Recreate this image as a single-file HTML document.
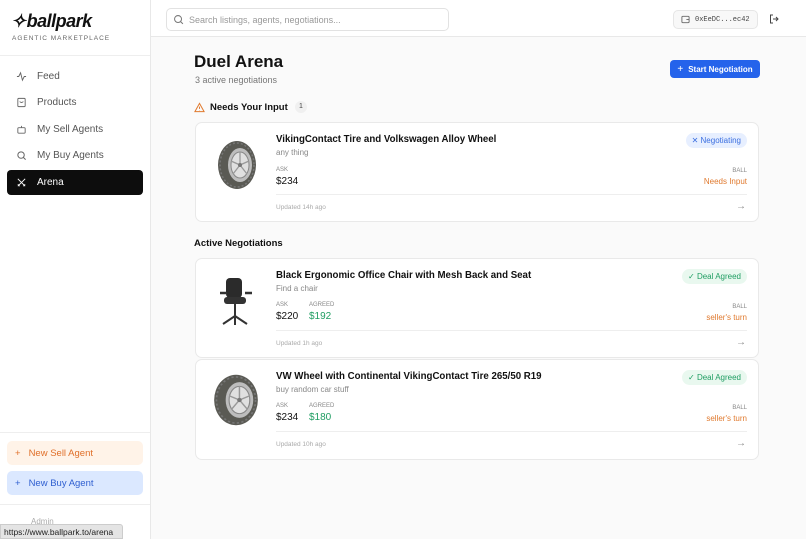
<!DOCTYPE html>
<html><head><meta charset="utf-8"><style>
*{box-sizing:border-box;margin:0;padding:0}
body{width:806px;height:539px;overflow:hidden;font-family:"Liberation Sans",sans-serif;background:#fafafa;position:relative;color:#111}
.a{position:absolute}
.side{left:0;top:0;width:151px;height:539px;background:#fff;border-right:1px solid #e8e8e8}
.nav{position:absolute;left:7px;width:136px;height:25px;font-size:10px;color:#555;display:flex;align-items:center;padding-left:9px;gap:10px}
.nav svg{width:11px;height:11px}
.card{position:absolute;left:195px;width:564px;background:#fff;border:1px solid #e9e9e9;border-radius:7px}
.t{position:absolute;left:80px;font-weight:bold;font-size:9.7px;color:#111}
.sub{position:absolute;left:80px;font-size:8px;color:#888}
.lbl{position:absolute;font-size:6px;color:#888}
.pr{position:absolute;font-size:10px;color:#111}
.hr{position:absolute;left:80px;right:11px;height:1px;background:#eee}
.upd{position:absolute;left:80px;font-size:6.5px;color:#aaa}
.arr{position:absolute;right:12px;font-size:10px;color:#888}
.badge{position:absolute;right:11px;height:15px;border-radius:8px;font-size:8px;display:flex;align-items:center;padding:0 6px;gap:3px}
.ball{position:absolute;right:11px;text-align:right}
.ball .l{font-size:6px;color:#888}
.ball .v{font-size:8px;color:#e07a2f;margin-top:3px}
</style></head><body>
<div class="a side">
 <div class="a" style="left:11px;top:11px;font-size:18px;font-weight:bold;font-style:italic;letter-spacing:-0.5px;color:#111">✧<span style="margin-left:1px">ballpark</span></div>
 <div class="a" style="left:12px;top:35px;font-size:6.5px;letter-spacing:1px;color:#666">AGENTIC MARKETPLACE</div>
 <div class="a" style="left:0;top:55px;width:150px;height:1px;background:#eee"></div>
 <div class="nav" style="top:64px"><svg viewBox="0 0 12 12" fill="none" stroke="#666" stroke-width="1"><path d="M1 6h2l2-4 2 8 2-4h2"/></svg>Feed</div>
 <div class="nav" style="top:90px"><svg viewBox="0 0 12 12" fill="none" stroke="#666" stroke-width="1"><rect x="2" y="1.5" width="8" height="9" rx="1"/><path d="M4 5q2 2 4 0"/></svg>Products</div>
 <div class="nav" style="top:117px"><svg viewBox="0 0 12 12" fill="none" stroke="#666" stroke-width="1"><rect x="2" y="4" width="8" height="6" rx="1"/><path d="M6 2v2"/></svg>My Sell Agents</div>
 <div class="nav" style="top:143px"><svg viewBox="0 0 12 12" fill="none" stroke="#666" stroke-width="1.1"><circle cx="5.5" cy="5.5" r="3.5"/><path d="M8 8l2.5 2.5"/></svg>My Buy Agents</div>
 <div class="nav" style="top:170px;background:#0d0d0d;color:#fff;border-radius:4px"><svg viewBox="0 0 12 12" fill="none" stroke="#fff" stroke-width="1"><path d="M2 2l8 8M10 2l-8 8M2 8l2 2M8 10l2-2"/></svg>Arena</div>
 <div class="a" style="left:0;top:432px;width:150px;height:1px;background:#eee"></div>
 <div class="a" style="left:7px;top:441px;width:136px;height:24px;background:#fff3e8;border-radius:5px;font-size:9.5px;color:#e0702a;display:flex;align-items:center;padding-left:8px;gap:8px"><span>+</span>New Sell Agent</div>
 <div class="a" style="left:7px;top:471px;width:136px;height:24px;background:#dbe8ff;border-radius:5px;font-size:9.5px;color:#2f5fd0;display:flex;align-items:center;padding-left:8px;gap:8px"><span>+</span>New Buy Agent</div>
 <div class="a" style="left:0;top:504px;width:150px;height:1px;background:#eee"></div>
 <div class="a" style="left:31px;top:517px;font-size:8px;color:#aaa">Admin</div>
</div>
<div class="a" style="left:151px;top:0;width:655px;height:37px;background:#fff;border-bottom:1px solid #e8e8e8"></div>
<div class="a" style="left:166px;top:8px;width:283px;height:23px;border:1px solid #e2e2e2;border-radius:5px;background:#fff;font-size:9px;color:#999;padding:6px 0 0 22px">Search listings, agents, negotiations...</div>
<svg class="a" style="left:173px;top:14px" width="11" height="11" viewBox="0 0 12 12" fill="none" stroke="#777" stroke-width="1.1"><circle cx="5.5" cy="5.5" r="3.8"/><path d="M8.3 8.3l2.5 2.5"/></svg>
<div class="a" style="left:673px;top:10px;width:85px;height:19px;border:1px solid #e6e6e6;border-radius:5px;background:#f8f8f8;font-family:'Liberation Mono',monospace;font-size:7px;color:#444;padding:5px 0 0 21px">0xEeDC...ec42</div>
<svg class="a" style="left:681px;top:15px" width="9" height="9" viewBox="0 0 10 10" fill="none" stroke="#666" stroke-width="1"><rect x="1" y="1.5" width="8" height="7" rx="1"/><path d="M6 5h3"/></svg>
<svg class="a" style="left:769px;top:14px" width="10" height="10" viewBox="0 0 10 10" fill="none" stroke="#444" stroke-width="1"><path d="M4 1H1.5v8H4M4 5h5M7 3l2 2-2 2"/></svg>
<div class="a" style="left:194px;top:52px;font-size:17px;font-weight:bold">Duel Arena</div>
<div class="a" style="left:195px;top:75px;font-size:9px;color:#777">3 active negotiations</div>
<div class="a" style="left:670px;top:60px;width:90px;height:18px;background:#2563eb;border-radius:4px;color:#fff;font-size:8px;font-weight:bold;display:flex;align-items:center;justify-content:center;gap:5px"><span style="font-weight:normal;font-size:10px">+</span>Start Negotiation</div>
<svg class="a" style="left:194px;top:102px" width="11" height="11" viewBox="0 0 12 12" fill="none" stroke="#e07a2f" stroke-width="1.1"><path d="M6 1.5L11 10.5H1z M6 5v2.5M6 9v.3"/></svg>
<div class="a" style="left:210px;top:102px;font-size:9.5px;font-weight:bold">Needs Your Input</div>
<div class="a" style="left:295px;top:101px;width:12px;height:12px;border-radius:6px;background:#f0f0f0;font-size:7px;text-align:center;line-height:12px;color:#444">1</div>
<div class="a" style="left:194px;top:238px;font-size:9.5px;font-weight:bold">Active Negotiations</div>

<svg width="0" height="0" style="position:absolute"><defs><g id="tire"><ellipse cx="0" cy="0" rx="19" ry="24" fill="#5a5a54"/><ellipse cx="0" cy="0" rx="17" ry="22" fill="none" stroke="#777" stroke-width="1.5" stroke-dasharray="2 2"/><ellipse cx="3" cy="0" rx="12" ry="17" fill="#bdbdbd"/><ellipse cx="3" cy="0" rx="9" ry="13" fill="#e0e0e0" stroke="#888" stroke-width="1"/><g stroke="#999" stroke-width="1.3"><path d="M3 0L3 -13M3 0L12 -4M3 0L10 9M3 0L-4 9M3 0L-6 -4"/></g><circle cx="3" cy="0" r="2" fill="#777"/></g></defs></svg>

<div class="card" style="top:122px;height:100px">
 <svg class="a" style="left:10px;top:11px" width="62" height="62" viewBox="-31 -31 62 62"><use href="#tire"/></svg>
 <div class="t" style="top:11px">VikingContact Tire and Volkswagen Alloy Wheel</div>
 <div class="sub" style="top:25px">any thing</div>
 <div class="lbl" style="left:80px;top:44px">ASK</div>
 <div class="pr" style="left:80px;top:53px">$234</div>
 <div class="badge" style="top:10px;background:#e7efff;color:#3b6fe0">✕ Negotiating</div>
 <div class="ball" style="top:45px"><div class="l">BALL</div><div class="v">Needs Input</div></div>
 <div class="hr" style="top:71px"></div>
 <div class="upd" style="top:81px">Updated 14h ago</div>
 <div class="arr" style="top:78px">→</div>
</div>

<div class="card" style="top:258px;height:100px">
 <svg class="a" style="left:20px;top:16px" width="40" height="54" viewBox="0 0 40 54"><rect x="10" y="3" width="16" height="20" rx="4" fill="#2b2b2b"/><rect x="8" y="22" width="22" height="7" rx="3" fill="#333"/><path d="M4 18h7M29 18h7" stroke="#333" stroke-width="2.5"/><path d="M19 29v12M7 49l12-8 12 8M19 41v9" stroke="#333" stroke-width="2" fill="none"/></svg>
 <div class="t" style="top:11px">Black Ergonomic Office Chair with Mesh Back and Seat</div>
 <div class="sub" style="top:25px">Find a chair</div>
 <div class="lbl" style="left:80px;top:43px">ASK</div>
 <div class="pr" style="left:80px;top:52px">$220</div>
 <div class="lbl" style="left:113px;top:43px">AGREED</div>
 <div class="pr" style="left:113px;top:52px;color:#1f9d62">$192</div>
 <div class="badge" style="top:10px;background:#e9f8ef;color:#1f9d62">✓ Deal Agreed</div>
 <div class="ball" style="top:45px"><div class="l">BALL</div><div class="v">seller's turn</div></div>
 <div class="hr" style="top:71px"></div>
 <div class="upd" style="top:81px">Updated 1h ago</div>
 <div class="arr" style="top:78px">→</div>
</div>

<div class="card" style="top:359px;height:101px">
 <svg class="a" style="left:9px;top:9px" width="62" height="62" viewBox="-31 -31 62 62"><g transform="scale(1.15,1.05)"><use href="#tire"/></g></svg>
 <div class="t" style="top:11px">VW Wheel with Continental VikingContact Tire 265/50 R19</div>
 <div class="sub" style="top:25px">buy random car stuff</div>
 <div class="lbl" style="left:80px;top:43px">ASK</div>
 <div class="pr" style="left:80px;top:52px">$234</div>
 <div class="lbl" style="left:113px;top:43px">AGREED</div>
 <div class="pr" style="left:113px;top:52px;color:#1f9d62">$180</div>
 <div class="badge" style="top:10px;background:#e9f8ef;color:#1f9d62">✓ Deal Agreed</div>
 <div class="ball" style="top:45px"><div class="l">BALL</div><div class="v">seller's turn</div></div>
 <div class="hr" style="top:71px"></div>
 <div class="upd" style="top:81px">Updated 10h ago</div>
 <div class="arr" style="top:78px">→</div>
</div>

<div class="a" style="left:0;top:524px;width:123px;height:15px;background:#e4e4e4;border:1px solid #ccc;border-radius:0 3px 0 0;font-size:8.5px;color:#222;padding:2px 0 0 3px">https://www.ballpark.to/arena</div>
</body></html>
